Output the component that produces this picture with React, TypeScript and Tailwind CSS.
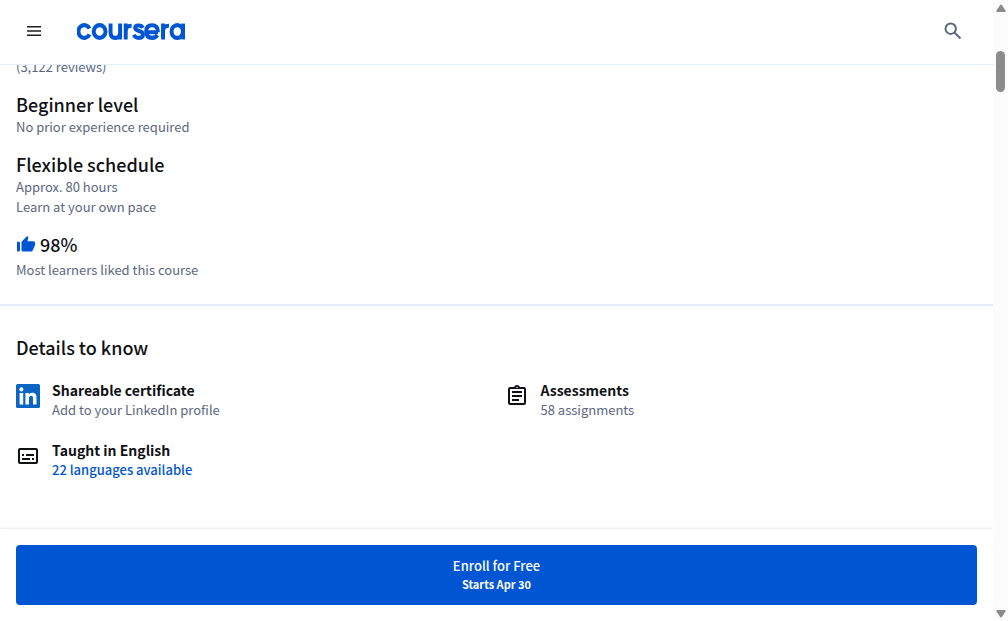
import type { ReactNode } from "react";

function CourseraLogo() {
  return (
    <svg
      viewBox="0 0 1155 176"
      className="h-[17px] w-[108px]"
      fill="none"
      stroke="#0056d2"
      strokeWidth="42"
      preserveAspectRatio="none"
      aria-hidden="true"
    >
      <path d="M134 119A63 66 0 1 1 134 57" />
      <ellipse cx="242" cy="88" rx="63" ry="66" />
      <path d="M359 6V98Q359 154 410 154T461 98V6M461 90V170" />
      <path d="M521 170V6M521 92Q521 26 584 28" />
      <path d="M704 50Q692 26 660 26Q622 26 622 50Q622 74 662 82Q706 90 706 122Q706 154 662 154Q622 154 608 122" />
      <path d="M740 96H866M866 96Q866 24 803 24Q740 24 740 88Q740 154 805 154Q842 154 860 126" />
      <path d="M920 170V6M920 92Q920 26 984 28" />
      <ellipse cx="1072" cy="88" rx="61" ry="66" />
      <path d="M1135 6V170" />
    </svg>
  );
}

function ThumbUpIcon() {
  return (
    <svg viewBox="0 0 20 20" className="size-5" fill="#0056d2" aria-hidden="true">
      <path d="M1 8.500a.7.7 0 0 1 .7-.7H2.800a1.200 1.200 0 0 1 1.200 1.200v7.300a1.200 1.200 0 0 1-1.200 1.200H1.700a.7.7 0 0 1-.7-.7zM5.500 8.300c0-.4.200-.8.500-1.100L11.200 2l.8.8c.3.300.4.700.3 1.100L11.500 7.300H17.500c.9 0 1.600.8 1.600 1.700v1.500c0 .3 0 .5-.1.700l-2.300 5.300c-.3.600-.8 1-1.500 1H7.100c-.9 0-1.600-.7-1.600-1.600z" />
    </svg>
  );
}

function LinkedInIcon() {
  return (
    <svg viewBox="0 0 24 24" className="size-6" aria-hidden="true">
      <rect width="24" height="24" rx="1.500" fill="#0a66c2" />
      <g fill="#fff">
        <circle cx="5.400" cy="5.400" r="2.050" />
        <path d="M3.600 9h3.600v11.400H3.600zM9.400 9h3.400v1.600c.5-.9 1.700-1.900 3.500-1.900 3.600 0 4.200 2.400 4.200 5.400v6.300H17v-5.600c0-1.300 0-3-1.850-3-1.900 0-2.150 1.400-2.150 2.900v5.700H9.400z" />
      </g>
    </svg>
  );
}

function AssessmentIcon() {
  return (
    <svg viewBox="0 0 24 24" className="size-6" fill="#0f1114" aria-hidden="true">
      <path d="M7 15h7v2H7zm0-4h10v2H7zm0-4h10v2H7z" />
      <path d="M19 3h-4.180C14.400 1.840 13.300 1 12 1s-2.400.84-2.820 2H5a2 2 0 0 0-2 2v14a2 2 0 0 0 2 2h14a2 2 0 0 0 2-2V5a2 2 0 0 0-2-2m-7-.25a.75.75 0 1 1 0 1.500.75.75 0 0 1 0-1.500M19 19H5V5h14z" />
    </svg>
  );
}

function SubtitlesIcon() {
  return (
    <svg viewBox="0 0 24 24" className="size-6" fill="#0f1114" aria-hidden="true">
      <path d="M20 4H4a2 2 0 0 0-2 2v12a2 2 0 0 0 2 2h16a2 2 0 0 0 2-2V6a2 2 0 0 0-2-2m0 14H4V6h16z" />
      <path d="M6 10h2v2H6zm0 4h8v2H6zm10 0h2v2h-2zm-6-4h8v2h-8z" />
    </svg>
  );
}

function Fact({ title, icon, lines }: { title: string; icon?: ReactNode; lines: string[] }) {
  return (
    <section>
      <h2 className="flex items-center gap-1 pb-0.5 text-lg leading-[22px] font-medium text-[#0f1114]">
        {icon}
        {title}
      </h2>
      {lines.map((line) => (
        <p key={line} className={icon ? "mt-[3px]" : ""}>
          {line}
        </p>
      ))}
    </section>
  );
}

function Detail({ title, icon, children }: { title: string; icon: ReactNode; children: ReactNode }) {
  return (
    <li className="flex gap-3">
      <span className="mt-1 shrink-0">{icon}</span>
      <div>
        <h3 className="text-sm leading-5 font-bold text-[#0f1114]">{title}</h3>
        {children}
      </div>
    </li>
  );
}

function ScrollRail() {
  return (
    <div className="relative z-10 flex w-[15px] shrink-0 flex-col items-center justify-between bg-[#fcfcfc] pt-1 pb-[3px]" aria-hidden="true">
      <div className="flex flex-col items-center">
        <svg viewBox="0 0 10 8" className="h-2 w-[10px]" fill="#8b8b8b">
          <path d="M4 1.200Q5 0 6 1.200L9.500 6.500Q10 8 9 8H1Q0 8 .5 6.500z" />
        </svg>
        <div className="mt-[39px] h-[41px] w-[9px] rounded-full bg-[#8b8b8b]" />
      </div>
      <svg viewBox="0 0 10 8" className="h-2 w-[10px]" fill="#8b8b8b">
        <path d="M4 6.800Q5 8 6 6.800L9.500 1.500Q10 0 9 0H1Q0 0 .5 1.500z" />
      </svg>
    </div>
  );
}

export default function App() {
  return (
    <div className="flex h-screen overflow-hidden bg-white font-['Noto_Sans_CJK_SC','Noto_Sans',sans-serif] text-[13px] leading-5 text-[#5b6780]">
      <div className="flex min-w-0 flex-1 flex-col">
        <header className="flex shrink-0 items-center border-b border-[#e3eeff] px-6 pt-[19px] pb-[21px]">
          <button type="button" aria-label="Open menu" className="flex size-5 items-center justify-center">
            <svg viewBox="0 0 14 10" className="h-[10px] w-[14px]" fill="#1f1f1f" aria-hidden="true">
              <path d="M0 0h14v1.500H0zM0 4.200h14v1.500H0zM0 8.500h14V10H0z" />
            </svg>
          </button>
          <a href="#" aria-label="Coursera" className="ml-[33px]">
            <CourseraLogo />
          </a>
          <button type="button" aria-label="Search" className="mr-1 ml-auto flex size-6 items-center justify-center">
            <svg viewBox="0 0 18 18" className="size-[18px]" fill="none" stroke="#5b6780" strokeWidth="2" aria-hidden="true">
              <circle cx="6.700" cy="6.700" r="5.200" />
              <path d="M10.500 10.500l6 6" />
            </svg>
          </button>
        </header>

        <main className="min-h-0 flex-1 overflow-hidden">
          <div className="-mt-2 flex flex-col gap-4 border-b-2 border-[#e5edfa] px-4 pb-6">
            <p>(3,122 reviews)</p>
            <Fact title="Beginner level" lines={["No prior experience required"]} />
            <Fact title="Flexible schedule" lines={["Approx. 80 hours", "Learn at your own pace"]} />
            <Fact title="98%" icon={<ThumbUpIcon />} lines={["Most learners liked this course"]} />
          </div>

          <section className="px-4 pt-[30px]">
            <h2 className="pb-0.5 text-lg leading-[22px] font-medium text-[#0f1114]">Details to know</h2>
            <ul className="mt-5 grid grid-cols-2 gap-x-4 gap-y-5">
              <Detail title="Shareable certificate" icon={<LinkedInIcon />}>
                <p>Add to your LinkedIn profile</p>
              </Detail>
              <Detail title="Assessments" icon={<AssessmentIcon />}>
                <p>58 assignments</p>
              </Detail>
              <Detail title="Taught in English" icon={<SubtitlesIcon />}>
                <button type="button" className="block font-medium text-[#0056d2]">
                  22 languages available
                </button>
              </Detail>
            </ul>
          </section>
        </main>

        <footer className="relative shrink-0 bg-white p-4 shadow-[0_0_3px_rgba(0,0,0,0.18)]">
          <button type="button" className="flex w-full flex-col items-center rounded bg-[#0056d2] py-3 text-white">
            <span className="leading-[18px] font-medium">Enroll for Free</span>
            <span className="text-[11px] leading-[18px] font-bold">Starts Apr 30</span>
          </button>
        </footer>
      </div>
      <ScrollRail />
    </div>
  );
}
